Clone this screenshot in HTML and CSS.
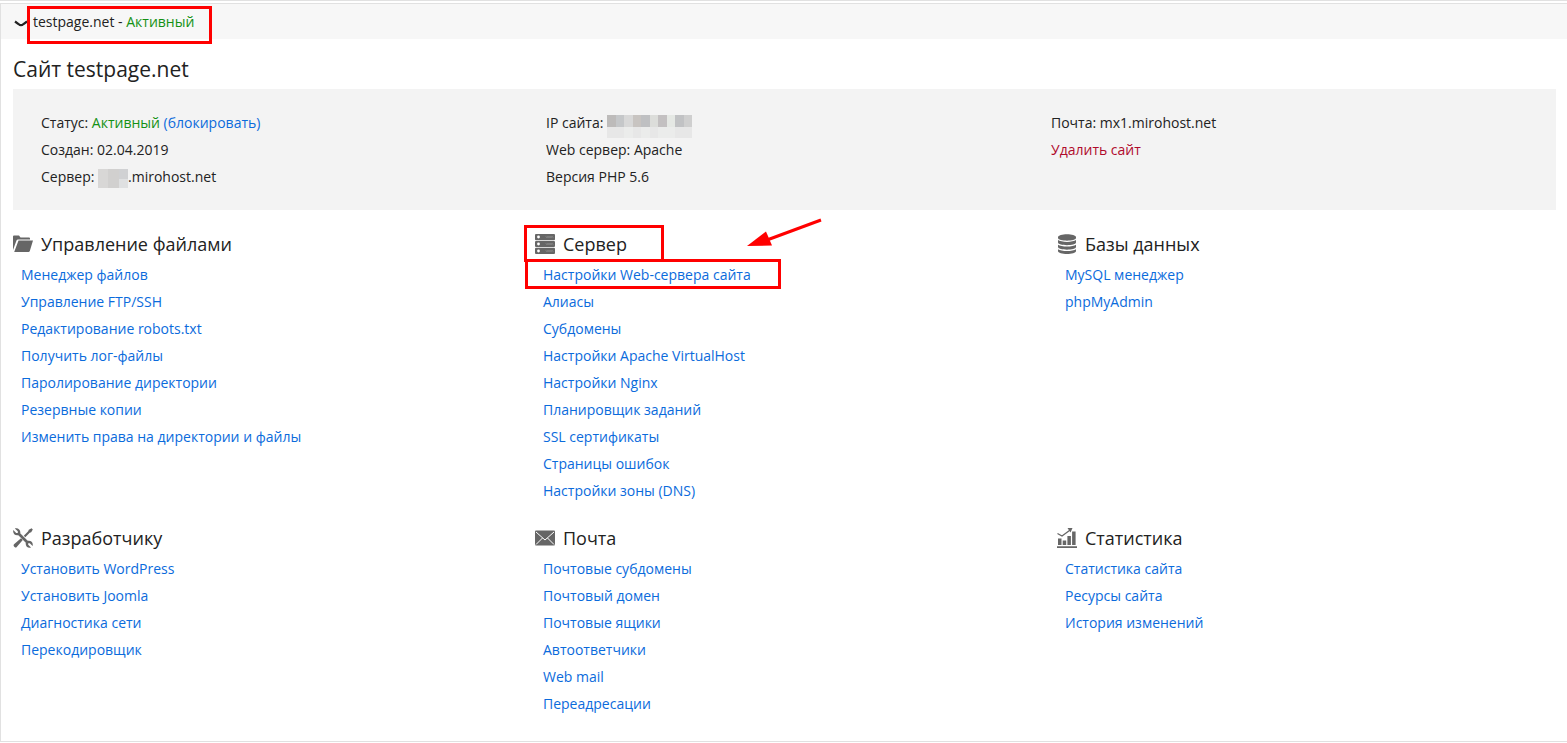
FILE: index.html
```html
<!DOCTYPE html>
<html lang="ru">
<head>
<meta charset="utf-8">
<title>testpage.net</title>
<link rel="stylesheet" href="styles.css">
</head>
<body>
<main class="site">
  <header class="site-bar">
    <button class="toggle" type="button" aria-label="Свернуть"><svg width="14" height="10" viewBox="0 0 14 10"><path d="M1 3.500L4.500 6Q7 8.500 9.500 6L13 3.500" fill="none" stroke="#222" stroke-width="2.200"/></svg></button>
    <span class="site-name">testpage.net - <span class="active">Активный</span></span>
    <span class="mark mark-site"></span>
  </header>

  <h1 class="title">Сайт testpage.net</h1>

  <section class="info">
    <div>
      <p>Статус: <span class="active">Активный</span> <a href="#">(блокировать)</a></p>
      <p>Создан: 02.04.2019</p>
      <p>Сервер: <svg class="mosaic" width="30" height="19" viewBox="0 0 30 19" shape-rendering="crispEdges"><path fill="#d8d7d6" d="M0 0h10v19H0z"/><path fill="#d1d0cf" d="M10 0h11v19H10z"/><path fill="#d0d1d3" d="M21 0h9v10H21z"/><path fill="#dfe0e1" d="M21 10h9v9H21z"/></svg>.mirohost.net</p>
    </div>
    <div>
      <p>IP сайта: <svg class="mosaic mosaic-ip" width="85" height="23" viewBox="0 0 85 23" shape-rendering="crispEdges"><path fill="#bdbbba" d="M0 0h9v12H0z"/><path fill="#c5c7c9" d="M9 0h8v12H9z"/><path fill="#d8d8d8" d="M17 0h9v12h-9z"/><path fill="#c8c4c1" d="M26 0h8v12h-8z"/><path fill="#bfc0c2" d="M34 0h9v12h-9z"/><path fill="#dcddda" d="M43 0h8v12h-8z"/><path fill="#c3c0c1" d="M51 0h9v12h-9z"/><path fill="#e5e8e4" d="M60 0h8v12h-8z"/><path fill="#c1c2c4" d="M68 0h9v12h-9z"/><path fill="#cfcfcf" d="M77 0h8v12h-8z"/><path fill="#e7e7e7" d="M0 12h17v11H0zM26 12h8v11h-8zM43 12h8v11h-8zM68 12h17v11H68z"/><path fill="#ebeceb" d="M17 12h9v11h-9zM34 12h9v11h-9zM51 12h17v11H51z"/></svg></p>
      <p>Web сервер: Apache</p>
      <p>Версия PHP 5.6</p>
    </div>
    <div>
      <p>Почта: mx1.mirohost.net</p>
      <p><a class="danger" href="#">Удалить сайт</a></p>
    </div>
  </section>

  <div class="groups">
    <section class="group">
      <h2><svg class="icon" viewBox="0 0 20 20"><path d="M0 16V2.500Q0 1.500 1 1.500H6L7.500 3.500H16Q17 3.500 17 4.500V5.500H5Q4 5.500 3.500 6.500Z"/><path d="M5.500 6.500H20L16.800 17Q16.500 18 15.500 18H1.200Z"/></svg>Управление файлами</h2>
      <ul>
        <li><a href="#">Менеджер файлов</a></li>
        <li><a href="#">Управление FTP/SSH</a></li>
        <li><a href="#">Редактирование robots.txt</a></li>
        <li><a href="#">Получить лог-файлы</a></li>
        <li><a href="#">Паролирование директории</a></li>
        <li><a href="#">Резервные копии</a></li>
        <li><a href="#">Изменить права на директории и файлы</a></li>
      </ul>
    </section>
    <section class="group">
      <h2><svg class="icon" viewBox="0 0 20 20"><rect y="0" width="20" height="6.300" rx="1"/><rect y="6.900" width="20" height="6.200" rx="1"/><rect y="13.700" width="20" height="6.300" rx="1"/><g fill="#fff"><circle cx="3.500" cy="3" r="1.400"/><circle cx="3.500" cy="10" r="1.400"/><circle cx="3.500" cy="17" r="1.400"/></g><path d="M11 2.500l1 1 1-1 1 1 1-1 1 1 1-1 1 1M11 9.500l1 1 1-1 1 1 1-1 1 1 1-1 1 1M11 16.500l1 1 1-1 1 1 1-1 1 1 1-1 1 1" fill="none" stroke="#aaa" stroke-width=".7"/></svg>Сервер</h2>
      <ul>
        <li><a href="#">Настройки Web-сервера сайта</a></li>
        <li><a href="#">Алиасы</a></li>
        <li><a href="#">Субдомены</a></li>
        <li><a href="#">Настройки Apache VirtualHost</a></li>
        <li><a href="#">Настройки Nginx</a></li>
        <li><a href="#">Планировщик заданий</a></li>
        <li><a href="#">SSL сертификаты</a></li>
        <li><a href="#">Страницы ошибок</a></li>
        <li><a href="#">Настройки зоны (DNS)</a></li>
      </ul>
      <span class="mark mark-server"></span>
      <span class="mark mark-link"></span>
      <svg class="arrow" width="76" height="32" viewBox="0 0 76 32"><path d="M74 2L20 22" stroke="#f00" stroke-width="3"/><path d="M0 28L19 13.500L25 27.500Z" fill="#f00"/></svg>
    </section>
    <section class="group">
      <h2><svg class="icon" viewBox="0 0 20 20"><path d="M1 3.200C1-.9 19-.9 19 3.200V4C19 7.500 1 7.500 1 4Z"/><path d="M1 6.100C4 8.500 16 8.500 19 6.100V8.500C19 12 1 12 1 8.500Z"/><path d="M1 10.700C4 13.100 16 13.100 19 10.700V13.100C19 16.600 1 16.600 1 13.100Z"/><path d="M1 15.300C4 17.700 16 17.700 19 15.300V17C19 21 1 21 1 17Z"/></svg>Базы данных</h2>
      <ul>
        <li><a href="#">MySQL менеджер</a></li>
        <li><a href="#">phpMyAdmin</a></li>
      </ul>
    </section>
    <section class="group">
      <h2><svg class="icon" viewBox="0 0 20 20"><path d="M1.800 .4L4.800 3.300V5H3.200L.3 2.100C-.5 5.500 2 8 5.300 7.200L12.800 14.700C12.100 18.200 14.700 20.500 18 19.600L15.200 16.800V15.200H16.800L19.600 18C20.500 14.600 18 12.100 14.700 12.800L7.200 5.300C8 2 5.200-.5 1.800 .4Z"/><path d="M19.800 1.400L18.600.2L15.800 1.800L15.200 3.300L10.800 7.700L12.300 9.200L16.700 4.800L18.200 4.200ZM8 10.200L9.800 12L3.700 19Q2.700 20 1.600 19L1 18.400Q0 17.300 1 16.300Z"/></svg>Разработчику</h2>
      <ul>
        <li><a href="#">Установить WordPress</a></li>
        <li><a href="#">Установить Joomla</a></li>
        <li><a href="#">Диагностика сети</a></li>
        <li><a href="#">Перекодировщик</a></li>
      </ul>
    </section>
    <section class="group">
      <h2><svg class="icon" viewBox="0 0 20 20"><rect y="2.500" width="20" height="15" rx="1"/><path d="M1 4L10 12L19 4M1 16.500L7.500 10M19 16.500L12.500 10" fill="none" stroke="#fff" stroke-width="1"/></svg>Почта</h2>
      <ul>
        <li><a href="#">Почтовые субдомены</a></li>
        <li><a href="#">Почтовый домен</a></li>
        <li><a href="#">Почтовые ящики</a></li>
        <li><a href="#">Автоответчики</a></li>
        <li><a href="#">Web mail</a></li>
        <li><a href="#">Переадресации</a></li>
      </ul>
    </section>
    <section class="group">
      <h2><svg class="icon" viewBox="0 0 20 20"><path d="M0 18.200H20V20H0ZM1 10.500H4.500V17H1ZM5.700 12.500H9.200V17H5.700ZM10.400 8H13.900V17H10.400ZM15.100 3.500H18.600V17H15.100Z"/><path d="M.5 5.500L5 8L13.500 1.800" fill="none" stroke="#666" stroke-width="1.300"/><path d="M10.500 0H15.500L13.500 4.500Z"/></svg>Статистика</h2>
      <ul>
        <li><a href="#">Статистика сайта</a></li>
        <li><a href="#">Ресурсы сайта</a></li>
        <li><a href="#">История изменений</a></li>
      </ul>
    </section>
  </div>
</main>
</body>
</html>
```
FILE: styles.css
```css
* {
  box-sizing: border-box;
}

body {
  margin: 0;
  padding-top: 2px;
  border-top: 1px solid #e1e1e1;
  background: #fff;
  color: #222;
  font: 14px/27px "Open Sans", "Noto Sans", sans-serif;
}

h1, h2, p, ul {
  margin: 0;
  padding: 0;
  font-weight: 400;
}

ul {
  list-style: none;
}

a {
  color: #0b6bdc;
  text-decoration: none;
}

.active {
  color: #149114;
}

.danger {
  color: #b00b2c;
}

.site {
  border: 1px solid #e1e1e1;
  border-right: 0;
  padding-bottom: 24px;
}

.site-bar {
  position: relative;
  display: flex;
  align-items: center;
  height: 35px;
  padding-left: 13px;
  background: #f7f7f7;
}

.toggle {
  display: flex;
  width: 19px;
  padding: 2px 0 0;
  border: 0;
  background: none;
}

.title {
  padding: 14px 12px 4px;
  font-size: 21px;
  line-height: 32px;
}

.info {
  display: grid;
  grid-template-columns: repeat(3, 1fr);
  margin: 0 11px 18px 12px;
  padding: 20px 0 20px 28px;
  background: #f3f3f3;
}

.mosaic {
  display: inline-block;
  height: 19px;
  vertical-align: middle;
}

.mosaic-ip {
  height: 23px;
  margin-bottom: -4px;
}

.groups {
  display: grid;
  grid-template-columns: repeat(3, 1fr);
  row-gap: 18px;
}

.group {
  position: relative;
  padding-left: 12px;
}

.group h2 {
  display: flex;
  align-items: center;
  gap: 8px;
  font-size: 18px;
  line-height: 33px;
}

.group ul {
  padding-left: 8px;
}

.icon {
  width: 20px;
  height: 20px;
  margin-bottom: 2px;
  fill: #666;
}

.mark {
  position: absolute;
  border: 3px solid #f00;
}

.mark-site {
  left: 26px;
  top: 2px;
  width: 185px;
  height: 38px;
}

.mark-server {
  left: 1px;
  top: -3px;
  width: 140px;
  height: 37px;
}

.mark-link {
  left: 2px;
  top: 31px;
  width: 256px;
  height: 30px;
}

.arrow {
  position: absolute;
  left: 224px;
  top: -10px;
}
```
